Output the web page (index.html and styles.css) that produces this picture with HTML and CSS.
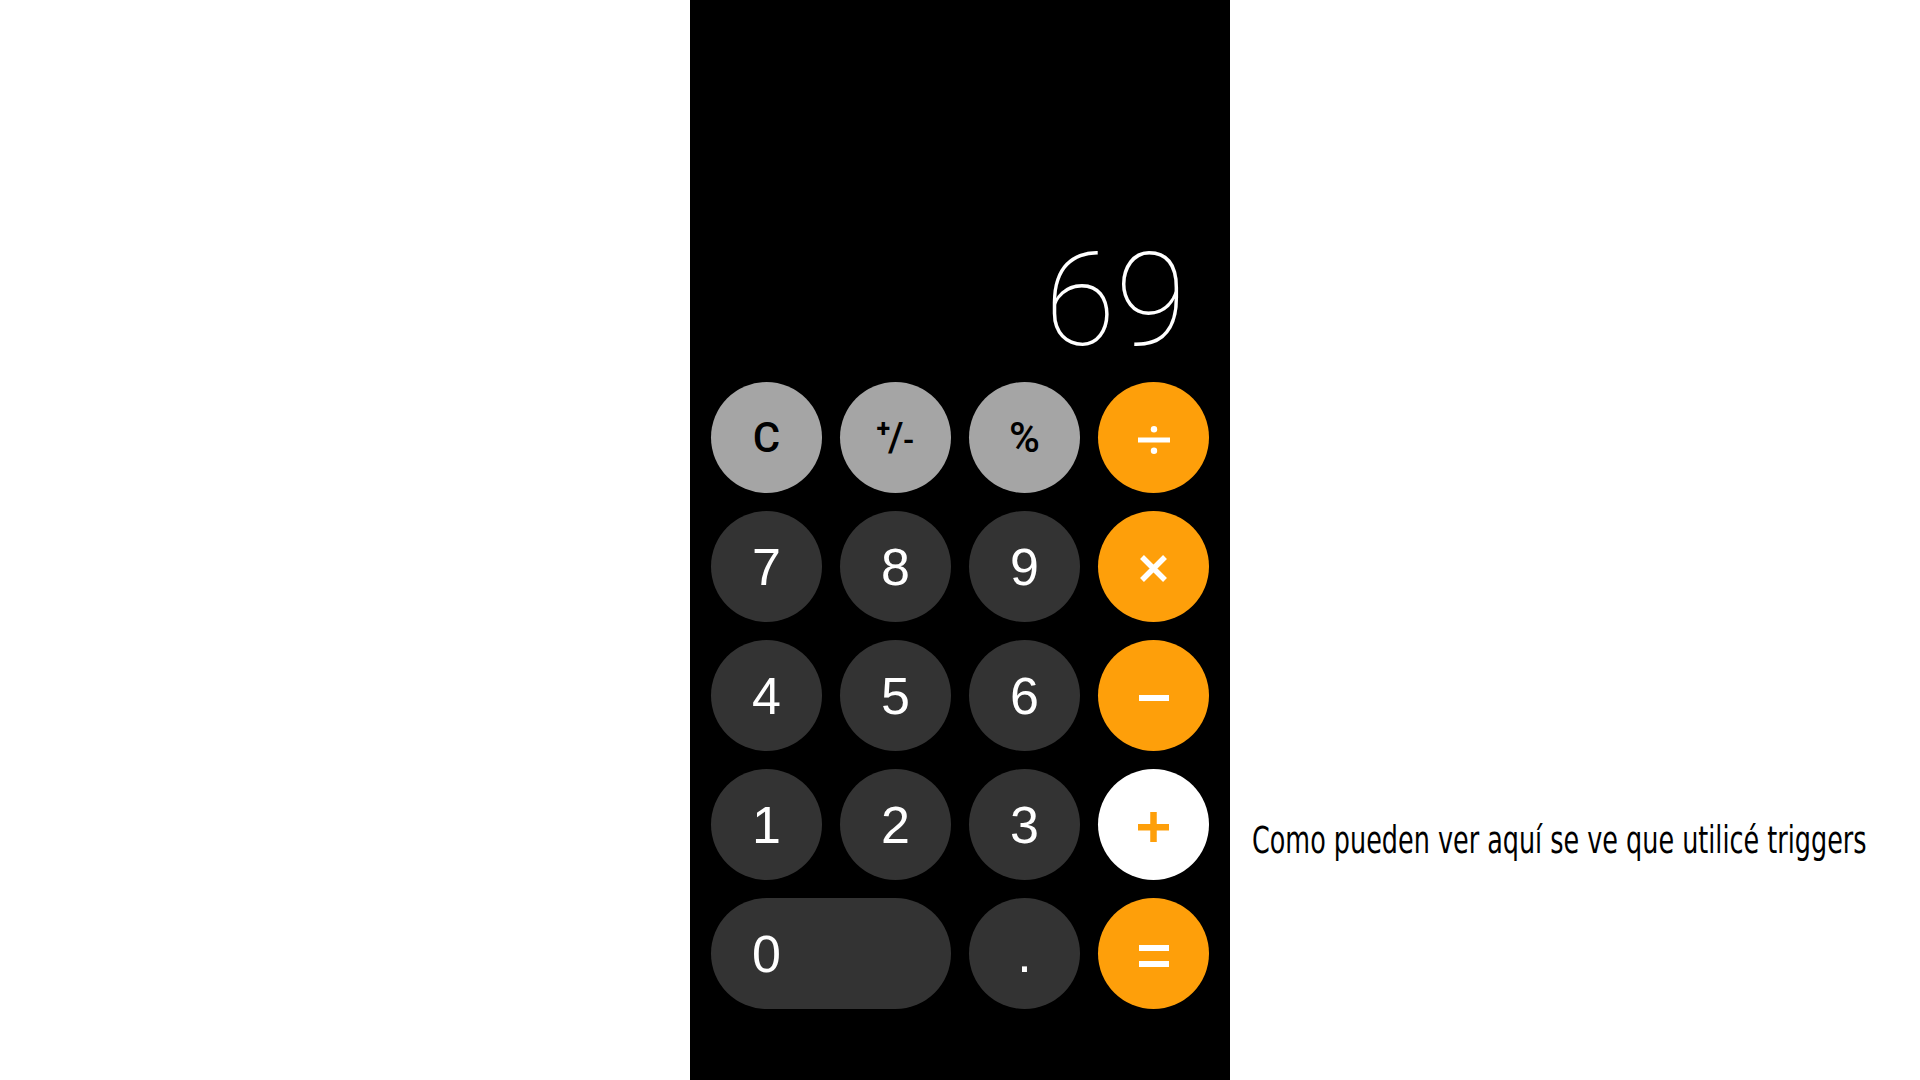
FILE: index.html
```html
<!DOCTYPE html>
<html lang="es">
<head>
<meta charset="utf-8">
<title>Calculadora</title>
<link rel="stylesheet" href="styles.css">
</head>
<body>
<div class="page">
  <div class="calc">
    <div class="display"><span class="value">69</span></div>
    <div class="keypad">
      <div class="key fn"><span class="fn-text">C</span></div>
      <div class="key fn"><span class="fn-text pm"><span class="sup">+</span>/<span class="sub">-</span></span></div>
      <div class="key fn"><span class="fn-text">%</span></div>
      <div class="key op">
        <svg class="op-icon" width="32" height="28" viewBox="0 0 32 28"><circle cx="16" cy="3.2" r="3.2" fill="#fff"/><rect x="0" y="11.5" width="32" height="5" fill="#fff"/><circle cx="16" cy="24.8" r="3.2" fill="#fff"/></svg>
      </div>

      <div class="key num">7</div>
      <div class="key num">8</div>
      <div class="key num">9</div>
      <div class="key op">
        <svg class="op-icon" width="29" height="29" viewBox="0 0 29 29"><path d="M3 3 L26 26 M26 3 L3 26" stroke="#fff" stroke-width="5.5" stroke-linecap="butt"/></svg>
      </div>

      <div class="key num">4</div>
      <div class="key num">5</div>
      <div class="key num">6</div>
      <div class="key op">
        <svg class="op-icon" width="30" height="6" viewBox="0 0 30 6"><rect x="0" y="0" width="30" height="6" fill="#fff"/></svg>
      </div>

      <div class="key num">1</div>
      <div class="key num">2</div>
      <div class="key num">3</div>
      <div class="key op active">
        <svg class="op-icon" width="31" height="30" viewBox="0 0 31 30"><rect x="0" y="12" width="31" height="6.5" fill="#fe9f0a"/><rect x="12.25" y="0" width="6.5" height="30" fill="#fe9f0a"/></svg>
      </div>

      <div class="key num zero">0</div>
      <div class="key num">.</div>
      <div class="key op">
        <svg class="op-icon" width="30" height="22" viewBox="0 0 30 22"><rect x="0" y="0" width="30" height="6" fill="#fff"/><rect x="0" y="16" width="30" height="6" fill="#fff"/></svg>
      </div>
    </div>
  </div>
  <p class="caption">Como pueden ver aquí se ve que utilicé triggers</p>
</div>
</body>
</html>
```
FILE: styles.css
```css
* { box-sizing: border-box; }

html, body {
  margin: 0;
  padding: 0;
  background: #ffffff;
}

.page {
  display: flex;
  align-items: flex-start;
  width: 1920px;
  height: 1080px;
  overflow: hidden;
}

.calc {
  margin-left: 690px;
  width: 540px;
  height: 1080px;
  background: #000000;
  display: flex;
  flex-direction: column;
}

.display {
  height: 382px;
  display: flex;
  justify-content: flex-end;
  align-items: flex-end;
  padding: 0 44px 17px 0;
}

.value {
  font-family: "Roboto", "Open Sans", sans-serif;
  font-weight: 100;
  font-size: 129px;
  line-height: 1;
  color: #ffffff;
}

.keypad {
  display: grid;
  grid-template-columns: repeat(4, 111px);
  grid-auto-rows: 111px;
  column-gap: 18px;
  row-gap: 18px;
  padding: 0 21px;
}

.key {
  border-radius: 56px;
  display: flex;
  align-items: center;
  justify-content: center;
  font-family: "Liberation Sans", Arial, sans-serif;
  line-height: 1;
}

.num {
  background: #333333;
  color: #ffffff;
  font-size: 52px;
}

.zero {
  grid-column: span 2;
  justify-content: flex-start;
  padding-left: 41px;
}

.fn {
  background: #a5a5a5;
  color: #000000;
}

.fn-text {
  font-family: "Roboto", "Liberation Sans", sans-serif;
  font-weight: 500;
  font-size: 42px;
}

.pm {
  font-size: 40px;
  display: inline-flex;
  align-items: center;
}

.sup {
  font-size: 25px;
  align-self: flex-start;
  margin-top: -2px;
  margin-right: -2px;
  font-weight: 700;
}

.sub {
  font-size: 30px;
  align-self: flex-end;
  margin-bottom: 3px;
  margin-left: -1px;
  font-weight: 700;
}

.op {
  background: #fe9f0a;
}

.op.active {
  background: #ffffff;
}

.op-icon {
  display: block;
  margin-top: 4px;
}

.caption {
  margin: 822px 0 0 22px;
  font-family: "DejaVu Sans", sans-serif;
  font-stretch: condensed;
  font-size: 37px;
  line-height: 37px;
  color: #000000;
  white-space: nowrap;
  transform: scaleX(0.765);
  transform-origin: left center;
}
```
